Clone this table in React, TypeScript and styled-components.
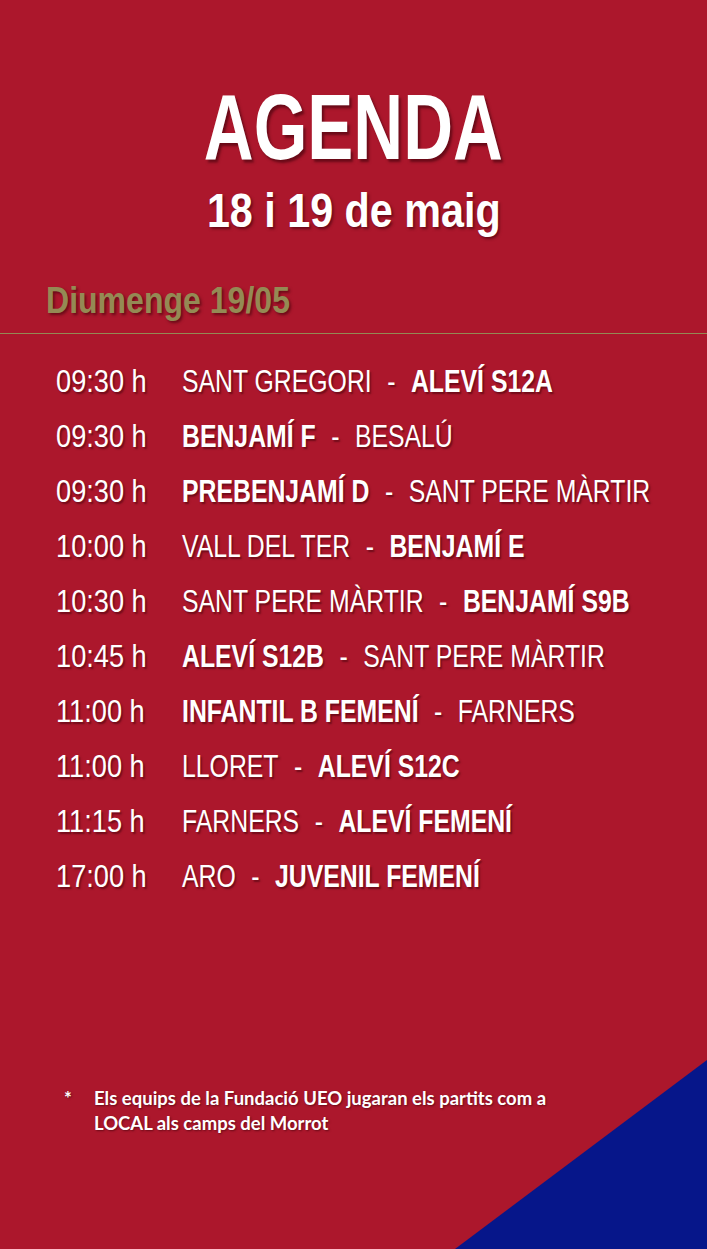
import React from 'react';
import styled, { createGlobalStyle } from 'styled-components';

const GlobalStyle = createGlobalStyle`
  html, body {
    margin: 0;
    padding: 0;
    background: #ac172c;
  }
`;

type Match = { time: string; home: string; away: string; bold: 'home' | 'away' };

const matches: Match[] = [
  { time: '09:30 h', home: 'SANT GREGORI', away: 'ALEVÍ S12A', bold: 'away' },
  { time: '09:30 h', home: 'BENJAMÍ F', away: 'BESALÚ', bold: 'home' },
  { time: '09:30 h', home: 'PREBENJAMÍ D', away: 'SANT PERE MÀRTIR', bold: 'home' },
  { time: '10:00 h', home: 'VALL DEL TER', away: 'BENJAMÍ E', bold: 'away' },
  { time: '10:30 h', home: 'SANT PERE MÀRTIR', away: 'BENJAMÍ S9B', bold: 'away' },
  { time: '10:45 h', home: 'ALEVÍ S12B', away: 'SANT PERE MÀRTIR', bold: 'home' },
  { time: '11:00 h', home: 'INFANTIL B FEMENÍ', away: 'FARNERS', bold: 'home' },
  { time: '11:00 h', home: 'LLORET', away: 'ALEVÍ S12C', bold: 'away' },
  { time: '11:15 h', home: 'FARNERS', away: 'ALEVÍ FEMENÍ', bold: 'away' },
  { time: '17:00 h', home: 'ARO', away: 'JUVENIL FEMENÍ', bold: 'away' },
];

const App: React.FC = () => {
  return (
    <Page>
      <GlobalStyle />
      <Header>
        <Title>AGENDA</Title>
        <Subtitle>18 i 19 de maig</Subtitle>
      </Header>

      <DayTitle>Diumenge 19/05</DayTitle>
      <Divider />

      <MatchList>
        {matches.map((m, i) => (
          <MatchRow key={i}>
            <TimeCell>
              <Time>{m.time}</Time>
            </TimeCell>
            <Teams>
              <Team $bold={m.bold === 'home'}>{m.home}</Team>
              <Dash>-</Dash>
              <Team $bold={m.bold === 'away'}>{m.away}</Team>
            </Teams>
          </MatchRow>
        ))}
      </MatchList>

      <Note>
        <Star>*</Star>
        <NoteText>
          Els equips de la Fundació UEO jugaran els partits com a LOCAL als camps del Morrot
        </NoteText>
      </Note>

      <Corner viewBox="0 0 252 189" preserveAspectRatio="none">
        <polygon points="252,0 252,189 0,189" fill="#06168a" />
      </Corner>
    </Page>
  );
};

const Page = styled.div`
  position: relative;
  width: 707px;
  height: 1249px;
  overflow: hidden;
  background: #ac172c;
  color: #fff;
  font-family: 'Liberation Sans', Arial, sans-serif;
`;

const Header = styled.div`
  display: flex;
  flex-direction: column;
  align-items: center;
  padding-top: 77px;
`;

const Title = styled.div`
  font-size: 92px;
  font-weight: 700;
  line-height: 100px;
  transform: scaleX(0.75);
  text-shadow: 3px 3px 3px rgba(60, 0, 10, 0.6);
`;

const Subtitle = styled.div`
  font-size: 48px;
  font-weight: 700;
  line-height: 56px;
  margin-top: 6px;
  transform: scaleX(0.86);
  text-shadow: 2px 2px 3px rgba(60, 0, 10, 0.6);
`;

const DayTitle = styled.div`
  margin-top: 40px;
  padding-left: 46px;
  font-size: 36px;
  font-weight: 700;
  line-height: 44px;
  color: #948a54;
  transform: scaleX(0.89);
  transform-origin: 46px 50%;
  text-shadow: 2px 2px 3px rgba(60, 0, 10, 0.6);
`;

const Divider = styled.div`
  margin-top: 10px;
  height: 1px;
  background: #948a54;
`;

const MatchList = styled.div`
  display: flex;
  flex-direction: column;
  padding-top: 25px;
  padding-left: 56px;
`;

const MatchRow = styled.div`
  display: flex;
  align-items: baseline;
  height: 55px;
  font-size: 32px;
  line-height: 44px;
  white-space: nowrap;
  text-shadow: 2px 2px 2px rgba(60, 0, 10, 0.55);
`;

const TimeCell = styled.div`
  width: 126px;
  flex-shrink: 0;
`;

const Time = styled.span`
  display: inline-block;
  transform: scaleX(0.85);
  transform-origin: left center;
`;

const Teams = styled.div`
  display: flex;
  align-items: baseline;
  flex-shrink: 0;
  transform: scaleX(0.775);
  transform-origin: left center;
`;

const Team = styled.span<{ $bold: boolean }>`
  font-weight: ${p => (p.$bold ? 700 : 400)};
`;

const Dash = styled.span`
  padding: 0 20px;
`;

const Note = styled.div`
  position: absolute;
  left: 64px;
  top: 1086px;
  display: flex;
  z-index: 1;
  font-family: Lato, 'Open Sans', sans-serif;
  font-size: 18.5px;
  font-weight: 700;
  line-height: 25px;
  text-shadow: 1px 1px 2px rgba(60, 0, 10, 0.6);
`;

const Star = styled.div`
  width: 30px;
  flex-shrink: 0;
`;

const NoteText = styled.div`
  width: 470px;
`;

const Corner = styled.svg`
  position: absolute;
  right: 0;
  bottom: 0;
  width: 252px;
  height: 189px;
  display: block;
`;

export default App;
